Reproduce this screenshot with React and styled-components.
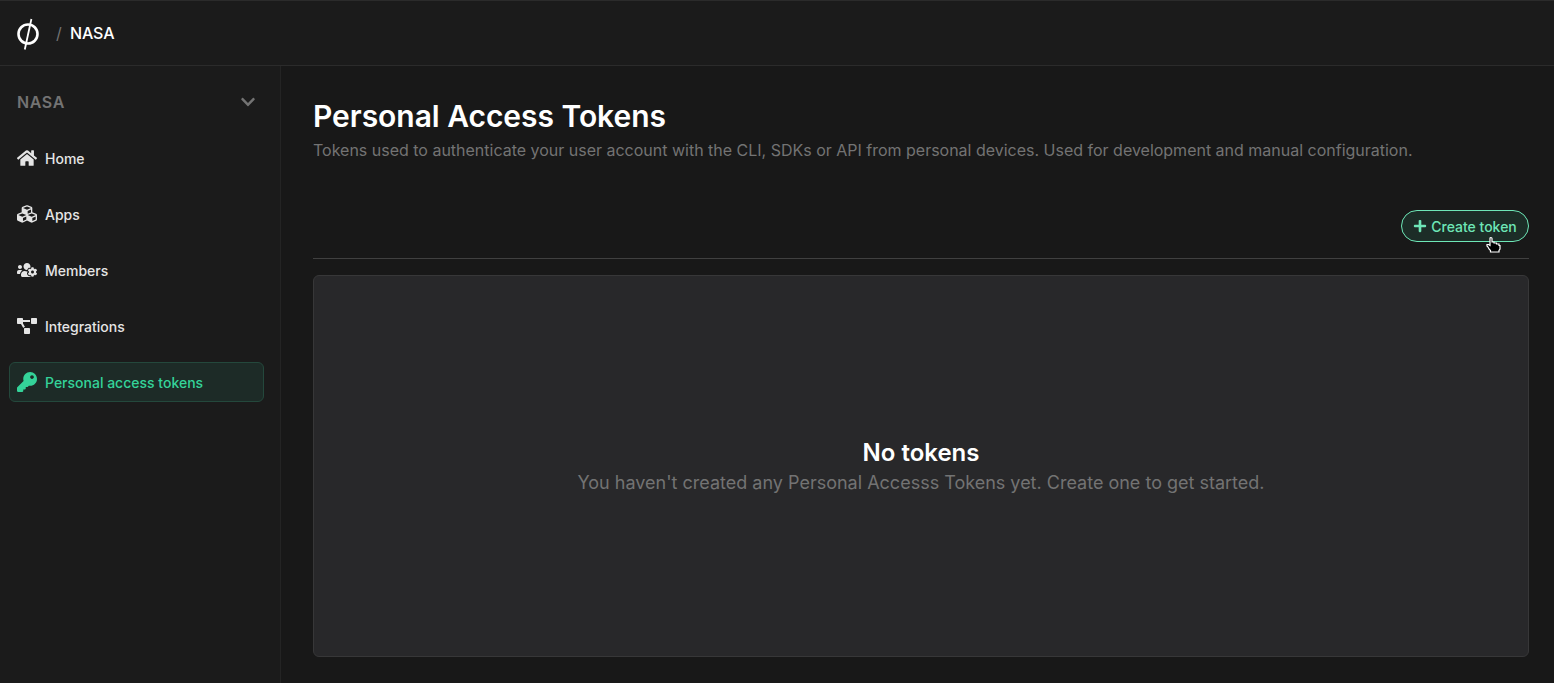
import React from "react";
import styled, { createGlobalStyle } from "styled-components";
import { FaHome, FaCubes, FaUsersCog, FaProjectDiagram, FaKey, FaPlus, FaChevronDown } from "react-icons/fa";

const GlobalStyle = createGlobalStyle`
  *, *::before, *::after { box-sizing: border-box; }
  html { background: #181818; }
  body {
    margin: 0;
    font-family: Inter, "Liberation Sans", sans-serif;
    -webkit-font-smoothing: antialiased;
    color: #fff;
    overflow: hidden;
  }
`;

const Page = styled.div`
  display: flex;
  flex-direction: column;
  height: 100vh;
  background: #181818;
`;

const TopBar = styled.header`
  display: flex;
  align-items: center;
  flex: none;
  height: 66px;
  padding-left: 16px;
  background: #1b1b1b;
  border-top: 1px solid #2b2b2b;
  border-bottom: 1px solid #2b2b2b;
`;

const Logo = styled.svg`
  width: 24px;
  height: 32px;
  margin-top: 1px;
  flex: none;
`;

const Slash = styled.span`
  margin-left: 16px;
  width: 5px;
  font-size: 16px;
  line-height: 24px;
  color: #737373;
`;

const Crumb = styled.span`
  margin-left: 9px;
  font-size: 16px;
  line-height: 24px;
  font-weight: 500;
  letter-spacing: -0.15px;
`;

const Body = styled.div`
  display: flex;
  flex: 1;
  min-height: 0;
`;

const Sidebar = styled.aside`
  flex: none;
  width: 281px;
  padding: 16px 16px 0 9px;
  background: #1b1b1b;
  border-right: 1px solid #242424;
`;

const OrgSwitcher = styled.div`
  display: flex;
  align-items: center;
  justify-content: space-between;
  height: 40px;
  padding: 0 8px;
  color: #737373;
  font-size: 16px;
  font-weight: 600;
  letter-spacing: 0.6px;
`;

const Nav = styled.nav`
  display: flex;
  flex-direction: column;
  gap: 16px;
  margin-top: 16px;
`;

const NavItem = styled.a`
  display: flex;
  align-items: center;
  gap: 8px;
  height: 40px;
  padding: 0 7px;
  border: 1px solid ${(p) => (p.$active ? "#24483c" : "transparent")};
  border-radius: 6px;
  background: ${(p) => (p.$active ? "#1d2b27" : "transparent")};
  color: ${(p) => (p.$active ? "#34d399" : "#e5e5e5")};
  font-size: 14px;
  line-height: 20px;
  font-weight: 500;
  svg { flex: none; }
`;

const Label = styled.span`
  padding-top: 2px;
`;

const Main = styled.main`
  display: flex;
  flex-direction: column;
  flex: 1;
  padding: 32px 25px 26px 32px;
`;

const Title = styled.h1`
  margin: 0;
  font-size: 30px;
  line-height: 36px;
  font-weight: 600;
  letter-spacing: -0.04px;
`;

const Description = styled.p`
  margin: 4px 0 0;
  font-size: 16px;
  line-height: 24px;
  letter-spacing: -0.007px;
  color: #737373;
`;

const Actions = styled.div`
  display: flex;
  justify-content: flex-end;
  margin-top: 48px;
  padding-bottom: 16px;
  border-bottom: 1px solid #404040;
`;

const CreateButton = styled.button`
  position: relative;
  display: flex;
  align-items: center;
  justify-content: center;
  gap: 4px;
  width: 128px;
  height: 32px;
  padding: 0;
  border: 1px solid #6ee7b7;
  border-radius: 16px;
  background: #1c2d27;
  color: #6ee7b7;
  font: 500 14px/20px Inter, "Liberation Sans", sans-serif;
  white-space: nowrap;
`;

const Pointer = styled.svg`
  position: absolute;
  left: 83px;
  top: 25px;
  width: 18px;
  height: 18px;
`;

const EmptyState = styled.section`
  display: flex;
  flex-direction: column;
  align-items: center;
  justify-content: center;
  flex: 1;
  margin-top: 16px;
  padding-top: 2px;
  border: 1px solid #373738;
  border-radius: 6px;
  background: #28282a;
`;

const EmptyTitle = styled.h2`
  margin: 0;
  font-size: 24px;
  line-height: 32px;
  font-weight: 600;
`;

const EmptyText = styled.p`
  margin: 0;
  font-size: 18px;
  line-height: 28px;
  color: #737373;
`;

const items = [
  { label: "Home", Icon: FaHome },
  { label: "Apps", Icon: FaCubes },
  { label: "Members", Icon: FaUsersCog },
  { label: "Integrations", Icon: FaProjectDiagram },
  { label: "Personal access tokens", Icon: FaKey, active: true },
];

export default function App() {
  return (
    <Page>
      <GlobalStyle />
      <TopBar>
        <Logo viewBox="0 0 24 32" fill="none" stroke="#fff">
          <circle cx="12" cy="16" r="9.5" strokeWidth="2.6" />
          <path d="M15.4 1 8.8 31.500" strokeWidth="1.8" />
        </Logo>
        <Slash>/</Slash>
        <Crumb>NASA</Crumb>
      </TopBar>
      <Body>
        <Sidebar>
          <OrgSwitcher>
            NASA
            <FaChevronDown size={16} />
          </OrgSwitcher>
          <Nav>
            {items.map(({ label, Icon, active }) => (
              <NavItem key={label} $active={active}>
                <Icon size={20} />
                <Label>{label}</Label>
              </NavItem>
            ))}
          </Nav>
        </Sidebar>
        <Main>
          <Title>Personal Access Tokens</Title>
          <Description>
            Tokens used to authenticate your user account with the CLI, SDKs or API from personal devices. Used for
            development and manual configuration.
          </Description>
          <Actions>
            <CreateButton>
              <FaPlus size={14} />
              <Label>Create token</Label>
              <Pointer viewBox="0 0 18 18">
                <path
                  d="M5 2.500Q5 1.500 6 1.500T7 2.500V6h2v1h2.500v1h2.500v1.500h1V13l-1 1.500V16H5.500v-1.500L4 13l-1-2-1-1V8.500h1.500L5 9.500z"
                  fill="#000"
                  stroke="#fff"
                  strokeWidth="1.2"
                />
              </Pointer>
            </CreateButton>
          </Actions>
          <EmptyState>
            <EmptyTitle>No tokens</EmptyTitle>
            <EmptyText>You haven't created any Personal Accesss Tokens yet. Create one to get started.</EmptyText>
          </EmptyState>
        </Main>
      </Body>
    </Page>
  );
}
